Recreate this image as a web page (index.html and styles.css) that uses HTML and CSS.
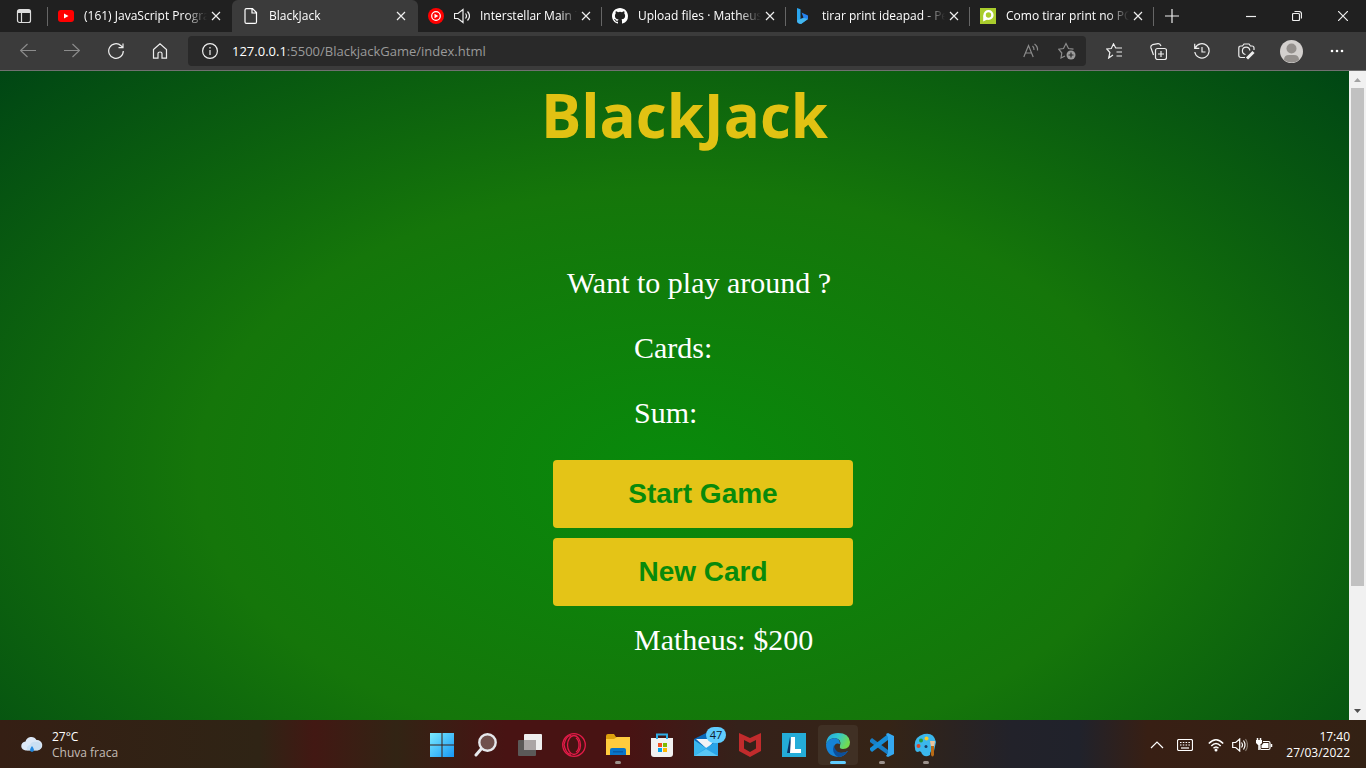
FILE: index.html
```html
<!DOCTYPE html>
<html lang="pt-BR">
<head>
<meta charset="utf-8">
<title>BlackJack</title>
<link rel="stylesheet" href="styles.css">
</head>
<body>
<header class="browser">
  <nav class="tabs" aria-label="Tabs">
    <button class="tab-menu" aria-label="Tab actions"><svg width="16" height="16" viewBox="0 0 16 16" fill="none" stroke="#ddd"><rect x="1.5" y="1.5" width="13" height="13" rx="2"/><path d="M2 3.500h12" stroke-width="3"/><path d="M5.500 5v9"/></svg></button>
    <div class="tab">
      <svg width="16" height="16" viewBox="0 0 16 16"><rect y="2" width="16" height="12" rx="3" fill="#f00"/><path d="M6 5.500v5L10.500 8z" fill="#fff"/></svg>
      <span class="tab-title">(161) JavaScript Progra</span>
      <button class="close" aria-label="Close tab"><svg width="10" height="10" viewBox="0 0 10 10"><path d="M1 1l8 8M9 1L1 9"/></svg></button>
    </div>
    <div class="tab active">
      <svg width="16" height="16" viewBox="0 0 16 16" fill="none" stroke="#fff"><path d="M3.500.6h6l4 4v9.300q0 1.500-1.500 1.500H3.500Q2 15.400 2 13.900V2.100Q2 .6 3.500.6zM9 .8V5h4.500"/></svg>
      <span class="tab-title">BlackJack</span>
      <button class="close" aria-label="Close tab"><svg width="10" height="10" viewBox="0 0 10 10"><path d="M1 1l8 8M9 1L1 9"/></svg></button>
    </div>
    <div class="tab">
      <svg width="16" height="16" viewBox="0 0 16 16"><circle cx="8" cy="8" r="8" fill="#f00"/><circle cx="8" cy="8" r="4.300" fill="none" stroke="#fff"/><path d="M6.500 5.700v4.600L10.300 8z" fill="#fff"/></svg>
      <svg width="16" height="16" viewBox="0 0 16 16" fill="none" stroke="#eee"><path d="M.5 5.500H4l5-4v13l-5-4H.5zM11.500 5.500q2 2.500 0 5M13.500 3.500q4 4.500 0 9"/></svg>
      <span class="tab-title">Interstellar Main T</span>
      <button class="close" aria-label="Close tab"><svg width="10" height="10" viewBox="0 0 10 10"><path d="M1 1l8 8M9 1L1 9"/></svg></button>
    </div>
    <div class="tab ruled">
      <svg width="16" height="16" viewBox="0 0 16 16"><path fill="#fff" d="M8 0C3.580 0 0 3.580 0 8c0 3.540 2.290 6.530 5.470 7.590.4.070.55-.17.55-.38 0-.19-.01-.82-.01-1.490-2.010.37-2.530-.49-2.690-.94-.09-.23-.48-.94-.82-1.130-.28-.15-.68-.52-.01-.53.63-.01 1.080.58 1.230.82.72 1.210 1.870.87 2.330.66.070-.52.28-.87.51-1.070-1.780-.2-3.640-.89-3.640-3.950 0-.87.31-1.590.82-2.150-.08-.2-.36-1.020.08-2.120 0 0 .67-.21 2.200.82a7.600 7.600 0 0 1 4 0c1.530-1.040 2.200-.82 2.200-.82.44 1.100.16 1.920.08 2.120.51.560.82 1.270.82 2.150 0 3.070-1.870 3.750-3.650 3.950.29.25.54.73.54 1.480 0 1.070-.01 1.930-.01 2.200 0 .21.150.46.550.38A8 8 0 0 0 16 8c0-4.420-3.580-8-8-8z"/></svg>
      <span class="tab-title">Upload files · Matheus</span>
      <button class="close" aria-label="Close tab"><svg width="10" height="10" viewBox="0 0 10 10"><path d="M1 1l8 8M9 1L1 9"/></svg></button>
    </div>
    <div class="tab ruled">
      <svg width="16" height="16" viewBox="0 0 16 16"><path d="M1 0l3.500 1.200V12L1 14z" fill="#2aa5ee"/><path d="M5.500 4.500L12 7.500v3.500L5 16q-4-.5-4-3l6.500-3.500z" fill="#2583ef"/><path d="M1 12.500l3.500-1.500L8 10l4 1-7 5q-4-.5-4-3.500z" fill="#43b7ed"/></svg>
      <span class="tab-title">tirar print ideapad - Pe</span>
      <button class="close" aria-label="Close tab"><svg width="10" height="10" viewBox="0 0 10 10"><path d="M1 1l8 8M9 1L1 9"/></svg></button>
    </div>
    <div class="tab ruled">
      <svg width="16" height="16" viewBox="0 0 16 16"><path d="M0 0h16v16H0z" fill="#a9cc2c"/><circle cx="8.500" cy="7" r="3.900" fill="none" stroke="#fff" stroke-width="2.400"/><path d="M3.200 7v6.500l5-2.500-2.500-2z" fill="#fff"/></svg>
      <span class="tab-title">Como tirar print no PC</span>
      <button class="close" aria-label="Close tab"><svg width="10" height="10" viewBox="0 0 10 10"><path d="M1 1l8 8M9 1L1 9"/></svg></button>
    </div>
    <button class="new-tab" aria-label="New tab"><svg width="14" height="14" viewBox="0 0 14 14"><path d="M7 0v14M0 7h14"/></svg></button>
    <div class="window-controls">
      <button aria-label="Minimize"><svg width="10" height="10" viewBox="0 0 10 10"><path d="M0 5.500h10"/></svg></button>
      <button aria-label="Restore"><svg width="10" height="10" viewBox="0 0 10 10"><rect x=".5" y="2.500" width="7" height="7" rx="1"/><path d="M2.500 .5H7Q9.500.5 9.500 3v4.500"/></svg></button>
      <button aria-label="Close"><svg width="10" height="10" viewBox="0 0 10 10"><path d="M0 0l10 10M10 0L0 10"/></svg></button>
    </div>
  </nav>
  <div class="toolbar">
    <div class="nav-buttons">
      <button class="dim" aria-label="Back"><svg width="16" height="16" viewBox="0 0 16 16"><path d="M16 7.500H.8M7.500 1l-7 6.500 7 6.500"/></svg></button>
      <button class="dim" aria-label="Forward"><svg width="16" height="16" viewBox="0 0 16 16"><path d="M0 7.500h15.200M8.500 1l7 6.500-7 6.500"/></svg></button>
      <button aria-label="Refresh"><svg width="16" height="16" viewBox="0 0 16 16"><path d="M15.300 8A7.300 7.300 0 1 1 13 2.700L14.800 4.500M15 .5v4.200h-4.500"/></svg></button>
      <button aria-label="Home"><svg width="16" height="16" viewBox="0 0 16 16"><path d="M1.500 6.500L8 .8l6.500 5.700v8.700H10V10.500Q10 9 8 9t-2 1.500v4.700H1.500z"/></svg></button>
    </div>
    <div class="address">
      <svg width="16" height="16" viewBox="0 0 16 16"><circle cx="8" cy="8" r="7.400"/><path d="M8 7v5M8 4v1.500"/></svg>
      <a class="url" href="#"><b>127.0.0.1</b>:5500/BlackjackGame/index.html</a>
      <button class="dim" aria-label="Read aloud"><svg width="16" height="16" viewBox="0 0 16 16"><path d="M.8 14L5.500 2.500 10.200 14M2.500 10h6M9.500 3q1.700 1.500 1.500 4M11.500 1q3.500 2.500 3 6.500"/></svg></button>
      <button class="dim" aria-label="Add favorite"><svg width="18" height="18" viewBox="0 0 18 18"><path d="M7 14l-4 2 .8-5L.7 7.200l4.800-.7L8 1.500l2.500 5 5 .7"/><circle class="solid" cx="13" cy="13" r="4.500" fill="#9a9a9a"/><path d="M13 10.500v5M10.500 13h5" stroke="#292929"/></svg></button>
    </div>
    <div class="tools">
      <button aria-label="Favorites"><svg width="17" height="16" viewBox="0 0 17 16"><path d="M7 12l-4.300 3 1.200-5.500L.8 6l4.500-.5L7.500.8 9.700 5H16M10.500 9H16M10.500 13H16"/></svg></button>
      <button aria-label="Collections"><svg width="17" height="17" viewBox="0 0 17 17"><rect x="5.500" y="5.500" width="11" height="11" rx="2"/><path d="M11 8v6M8 11h6M3.500 12L1 5Q.3 2.500 2.500 1.700L8 .7q2-.3 3 2.300"/></svg></button>
      <button aria-label="History"><svg width="16" height="16" viewBox="0 0 16 16"><path d="M1.300 5A7.200 7.200 0 1 1 .8 9M.7.7v4.600h4.600M8 4v5h3.500"/></svg></button>
      <button aria-label="Web capture"><svg width="17" height="17" viewBox="0 0 17 17"><path d="M7 14.500H3Q.8 14.500.8 12.300V5Q.8 3 3 3h1.500L6 1h5l1.500 2H14q2 0 2 2v2"/><path d="M7.500 11.500A3.700 3.700 0 1 1 11.800 7.500"/><path d="M9 15.500l6.500-6.500" stroke-width="3"/></svg></button>
      <button aria-label="Profile"><svg class="solid" width="23" height="23" viewBox="0 0 23 23"><circle cx="11.500" cy="11.500" r="11.500" fill="#d3d0ce"/><circle cx="11.500" cy="8.500" r="5" fill="#94908d"/><path d="M4 20q0-5 5-5h5q5 0 5 5-7 5-15 0z" fill="#94908d"/></svg></button>
      <button aria-label="More"><svg class="solid" width="14" height="4" viewBox="0 0 14 4"><g fill="#fff"><circle cx="2" cy="2" r="1.300"/><circle cx="7" cy="2" r="1.300"/><circle cx="12" cy="2" r="1.300"/></g></svg></button>
    </div>
  </div>
</header>

<div class="viewport">
  <main class="page">
    <h1>BlackJack</h1>
    <section class="game">
      <div class="board">
        <p class="message">Want to play around ?</p>
        <p>Cards:</p>
        <p>Sum:</p>
        <button class="play">Start Game</button>
        <button class="play">New Card</button>
        <p class="player">Matheus: $200</p>
      </div>
    </section>
  </main>
  <div class="scrollbar" aria-hidden="true">
    <svg width="17" height="17" viewBox="0 0 17 17"><path d="M5 11l3.500-4 3.500 4z" fill="#a3a3a3"/></svg>
    <div class="track"><div class="thumb"></div></div>
    <svg width="17" height="17" viewBox="0 0 17 17"><path d="M5 6l3.500 4L12 6z" fill="#505050"/></svg>
  </div>
</div>

<footer class="taskbar">
  <button class="weather">
    <svg width="22" height="18" viewBox="0 0 22 18"><path d="M5 14.500a4.500 4.500 0 0 1-.5-9A6 6 0 0 1 15.500 4a5.200 5.200 0 0 1 1 10.500z" fill="#dce8f6"/><path d="M9 9q2-4 6-3 4-1 5 3 1 5-4 5.500H6q-1-5 3-5.500z" fill="#bcd8f1" opacity=".6"/><path d="M11 10q-4 5 0 6 4-1 0-6z" fill="#2288e0"/></svg>
    <span class="weather-text"><span>27°C</span><span class="muted">Chuva fraca</span></span>
  </button>
  <div class="apps">
    <button aria-label="Start"><svg width="24" height="24" viewBox="0 0 24 24"><defs><linearGradient id="win" x2="1" y2="1"><stop stop-color="#7cecff"/><stop offset="1" stop-color="#1697f5"/></linearGradient></defs><path d="M0 0h11.500v11.500H0zM12.500 0H24v11.500H12.500zM0 12.500h11.500V24H0zM12.500 12.500H24V24H12.500z" fill="url(#win)"/></svg></button>
    <button aria-label="Search"><svg width="24" height="24" viewBox="0 0 24 24" fill="#70504c" stroke="#e6e8ec"><path d="M8 15l-6 7" stroke-width="3" stroke-linecap="round"/><circle cx="13.500" cy="9.500" r="8.200" stroke-width="2.400"/></svg></button>
    <button aria-label="Task view"><svg width="24" height="24" viewBox="0 0 24 24"><rect x="6" y="1" width="18" height="16" rx="1" fill="#eee"/><rect y="7" width="18" height="16" rx="1" fill="#5b5958"/><path d="M6 7h12v10H6z" fill="#aaa5a5"/></svg></button>
    <button aria-label="Opera"><svg width="24" height="24" viewBox="0 0 24 24" fill="none" stroke="#e31b48" stroke-width="1.300"><circle cx="12" cy="12" r="11.300"/><ellipse cx="12" cy="12" rx="6.500" ry="9.500"/><path d="M9 2.700q-5-.5-7 9 2 10 7 9.500M14 5q3 2 3 7t-3 7"/></svg></button>
    <button class="running" aria-label="Files"><svg width="24" height="24" viewBox="0 0 24 24"><path d="M0 3q0-2 2-2h6l2 3h14v18H0z" fill="#dda00d"/><path d="M0 6h8l3-2h13v18H0z" fill="#ffcc3e"/><path d="M4 22v-5q0-2 2-2h12q2 0 2 2v5z" fill="#0875c9"/><path d="M7 18h10v1.500H7z" fill="#075ba6"/></svg></button>
    <button aria-label="Store"><svg width="24" height="24" viewBox="0 0 24 24"><path d="M1 5h22v16q0 3-3 3H4q-3 0-3-3z" fill="#f1f1f1"/><path d="M7 6V1.500h10V6" fill="none" stroke="#2eaee8" stroke-width="2"/><path d="M8 10h4v4H8z" fill="#f25022"/><path d="M13 10h4v4h-4z" fill="#7fba00"/><path d="M8 15h4v4H8z" fill="#00a4ef"/><path d="M13 15h4v4h-4z" fill="#ffb900"/></svg></button>
    <button class="mail" aria-label="Mail"><svg width="24" height="24" viewBox="0 0 24 24"><path d="M0 6l12-6 12 6v17H0z" fill="#0868b9"/><path d="M2 6h20l-9 10z" fill="#f0f2f5"/><path d="M0 7l15 10-9 6H0z" fill="#39b7ef"/><path d="M24 7L0 23h24z" fill="#2aa4e8"/><path d="M12 16l12 7H0z" fill="#59c6f5"/></svg><span class="badge">47</span></button>
    <button aria-label="McAfee"><svg width="24" height="24" viewBox="0 0 24 24"><path d="M1 0l11 5L23 0v18l-11 6-11-6zM6 7v8.500l6 3.500 6-3.500V7l-6 3z" fill="#c12b2c" fill-rule="evenodd"/></svg></button>
    <button aria-label="Lenovo Vantage"><svg width="24" height="24" viewBox="0 0 24 24"><path d="M0 0h24v24H0z" fill="#24acd8"/><path d="M8 4L5 20h5V16z" fill="#0b3264"/><path d="M9 4h4v12h6v4H8z" fill="#fff"/></svg></button>
    <button class="running current" aria-label="Edge"><svg width="24" height="24" viewBox="0 0 24 24"><defs><linearGradient id="edge" x2="1" y2=".4"><stop stop-color="#22a3df"/><stop offset=".5" stop-color="#31c7cf"/><stop offset="1" stop-color="#72dc50"/></linearGradient></defs><path d="M0 11Q1 0 12 0q11 0 12 9 0 7-7 7-4 0-3-3Q16 6 9 5 3 5 0 11z" fill="url(#edge)"/><path d="M0 11q3-6 9-6 5 1 5 6-5-2-6 3 0 6 7 6 4 0 7-2-4 6-10 6Q0 23 0 11z" fill="#1583d6"/><path d="M8 12q-3 8 4 12 6 0 10-6-5 3-10 1-4-3-4-7z" fill="#0b4f9c"/></svg></button>
    <button class="running" aria-label="Visual Studio Code"><svg width="24" height="24" viewBox="0 0 24 24"><path d="M0 7l2-2 16 12v5L0 9z" fill="#187dc4"/><path d="M0 17l2 2L18 7V1L0 15z" fill="#168dd7"/><path d="M18 0l6 3v18l-6 3-2-1 2-3V4l-2-3z" fill="#35a8f0"/></svg></button>
    <button class="running" aria-label="Paint"><svg width="24" height="24" viewBox="0 0 24 24"><path d="M1 15Q-1 4 10 1q10-2 12 8l-2 9q-4-1-4 4-5 3-8-1-1-4-4-2-3 0-3-4z" fill="#3bb7ed"/><circle cx="4.500" cy="13" r="2" fill="#d8472c"/><circle cx="7" cy="7.500" r="2" fill="#269d3c"/><circle cx="12.500" cy="5.500" r="2" fill="#f8ca29"/><circle cx="12" cy="13.500" r="1.500" fill="#193c65"/><path d="M16 8h5l-1 6h-3z" fill="#eac49d"/><path d="M17 13h3v9q-1.500 3-3 0z" fill="#b86a16"/></svg></button>
  </div>
  <div class="tray">
    <button aria-label="Hidden icons"><svg width="14" height="10" viewBox="0 0 14 10"><path d="M1 8l6-6 6 6"/></svg></button>
    <button aria-label="Keyboard"><svg width="16" height="12" viewBox="0 0 16 12"><rect x=".5" y=".5" width="15" height="11" rx="1.500"/><path d="M3 3.500h10M3 6h10" stroke-dasharray="1.500 1.300"/><path d="M4 9h8"/></svg></button>
    <button class="status" aria-label="Network, volume and battery">
      <svg width="16" height="14" viewBox="0 0 16 14"><path d="M.8 5.500q7.200-7.500 14.400 0M3.300 8q4.700-5 9.400 0M5.500 10.300q2.500-2.600 5 0" stroke-width="1.500"/><circle cx="8" cy="12" r="1.500" fill="#fff" stroke="none"/></svg>
      <svg width="16" height="14" viewBox="0 0 16 14"><path d="M.7 4.500h3l4-3.500v12l-4-3.500h-3zM9.500 4.500q2 2.500 0 5M11.500 2.500q3 4.500 0 9"/><path d="M13.500 1q4 6 0 12" stroke="#85776d"/></svg>
      <svg width="17" height="14" viewBox="0 0 17 14"><path d="M7 3.500h5.500q1.500 0 1.500 1.500v5q0 1.500-1.500 1.500H5.500Q4 11.500 4 10V7"/><path d="M7.500 5H12.500v5H5.500V7.500z" fill="#fff" stroke="none"/><path d="M1.500 0v3M4.500 0v3M3 5v7M15.500 6v3" stroke-width="1.500"/><path d="M0 2h6v3L4 7H2L0 5z" fill="#fff" stroke="none"/></svg>
    </button>
    <button class="clock"><span>17:40</span><span>27/03/2022</span></button>
  </div>
</footer>
</body>
</html>
```
FILE: styles.css
```css
* { box-sizing: border-box; }
body {
  margin: 0;
  height: 100vh;
  display: flex;
  flex-direction: column;
  overflow: hidden;
  font: 12px/16px "Open Sans", "Noto Sans", sans-serif;
  color: #fff;
}
button {
  border: 0;
  padding: 0;
  background: none;
  color: inherit;
  font: inherit;
}
svg { display: block; flex: none; }

/* Browser frame */
.browser { background: #3b3b3b; border-bottom: 1px solid #707070; }
.browser svg { stroke-width: 1.2; }
.browser button { display: grid; place-items: center; }
.tabs { display: flex; height: 32px; background: #202020; }
.tab-menu { width: 48px; position: relative; }
.tab {
  position: relative;
  display: flex;
  align-items: center;
  flex: 0 1 184px;
  min-width: 0;
  padding: 0 11px 0 10px;
  gap: 10px;
}
.tab.active {
  flex-basis: 186px;
  padding: 0 12px 0 11px;
  background: #3b3b3b;
  border-radius: 6px 6px 0 0;
}
.tab.ruled::before, .tab-menu::after, .new-tab::before {
  content: "";
  position: absolute;
  left: 0;
  top: 7px;
  width: 1px;
  height: 19px;
  background: #666;
}
.tab-menu::after { left: auto; right: 0; }
.tab.ruled::before, .new-tab::before { left: -1px; }
.tab-title {
  flex: 1;
  min-width: 0;
  margin-right: -6px;
  overflow: hidden;
  white-space: nowrap;
  mask-image: linear-gradient(to right, #000 82%, transparent);
}
.close svg, .new-tab svg, .window-controls svg { fill: none; stroke: #eee; }
.new-tab { position: relative; width: 36px; }
.window-controls { display: flex; margin-left: auto; }
.window-controls button { width: 46px; }
.toolbar { display: flex; align-items: center; height: 38px; }
.toolbar svg { fill: none; stroke: #eee; }
.toolbar .dim svg { stroke: #8c8c8c; }
.toolbar .solid { stroke: none; }
.nav-buttons { display: flex; padding-left: 6px; width: 188px; }
.nav-buttons button { width: 44px; height: 30px; }
.address {
  display: flex;
  align-items: center;
  flex: 1;
  height: 30px;
  padding: 0 8px 0 14px;
  gap: 14px;
  border-radius: 4px;
  background: #292929;
  font-size: 13px;
}
.address button { width: 22px; }
.url { flex: 1; color: #9a9a9a; text-decoration: none; }
.url b { color: #fff; font-weight: 400; }
.tools { display: flex; padding: 0 6px; }
.tools button { width: 44px; height: 30px; }
.tools button:nth-child(n+5) { width: 46px; }

/* Game */
.viewport { flex: 1; display: flex; min-height: 0; }
.page {
  flex: 1;
  overflow: hidden;
  background: radial-gradient(#088a0b, #15760a 50%, #004614) 0 0 / 100% 123%;
}
h1 {
  margin: 0;
  padding: 8px 0 0 20px;
  font: 700 60px/72px "Open Sans", "Noto Sans", sans-serif;
  color: #e1c213;
  text-align: center;
}
.game {
  display: flex;
  justify-content: center;
  padding: 114px 0 0 57px;
}
.board {
  display: flex;
  flex-direction: column;
  width: 300px;
  font: 30px/35px "Liberation Serif", "Times New Roman", serif;
}
.board p { margin: 0 0 30px; padding-left: 81px; }
.board .message { padding: 0 8px 0 0; text-align: center; }
.board .player { margin: 6px 0 0; }
.play {
  height: 68px;
  margin-bottom: 10px;
  border-radius: 4px;
  background: #e4c417;
  color: #088a0b;
  font: bold 28px/32px "Liberation Sans", Arial, sans-serif;
}
.scrollbar { display: flex; flex-direction: column; width: 17px; background: #f1f1f1; }
.track { flex: 1; padding: 0 2px; }
.thumb { height: 81%; background: #c1c1c1; }

/* Taskbar */
.taskbar {
  display: grid;
  grid-template-columns: 1fr auto 1fr;
  align-items: center;
  height: 48px;
  padding-top: 1px;
  background: linear-gradient(to right, #351f14, #2f2415 19%, #421813 23%, #322414 29%, #481313 37%, #481313 46%, #35211a 54%, #352416 65%, #22222a 74%, #20222b 79%, #381f14 84%, #332114);
}
.weather { display: flex; align-items: center; gap: 9px; padding-left: 21px; text-align: left; }
.weather-text, .clock { display: flex; flex-direction: column; }
.muted { color: #c4bdb7; }
.apps { display: flex; gap: 4px; padding-left: 2px; }
.apps button {
  position: relative;
  display: grid;
  place-items: center;
  width: 40px;
  height: 40px;
  border-radius: 4px;
}
.running::after {
  content: "";
  position: absolute;
  left: 17px;
  bottom: 1px;
  width: 6px;
  height: 3px;
  border-radius: 2px;
  background: #9b918b;
}
.apps .current { background: #403024; }
.current::after { left: 12px; width: 16px; background: #60cdff; }
.badge {
  position: absolute;
  top: 2px;
  right: 0;
  width: 20px;
  border-radius: 8px;
  background: #60cdff;
  color: #102030;
  font-size: 11px;
}
.tray { display: flex; align-items: center; justify-content: flex-end; gap: 13px; padding-right: 16px; }
.tray svg { fill: none; stroke: #fff; stroke-width: 1.2; }
.status { display: flex; gap: 8px; padding-left: 2px; }
.clock { text-align: right; }
```
